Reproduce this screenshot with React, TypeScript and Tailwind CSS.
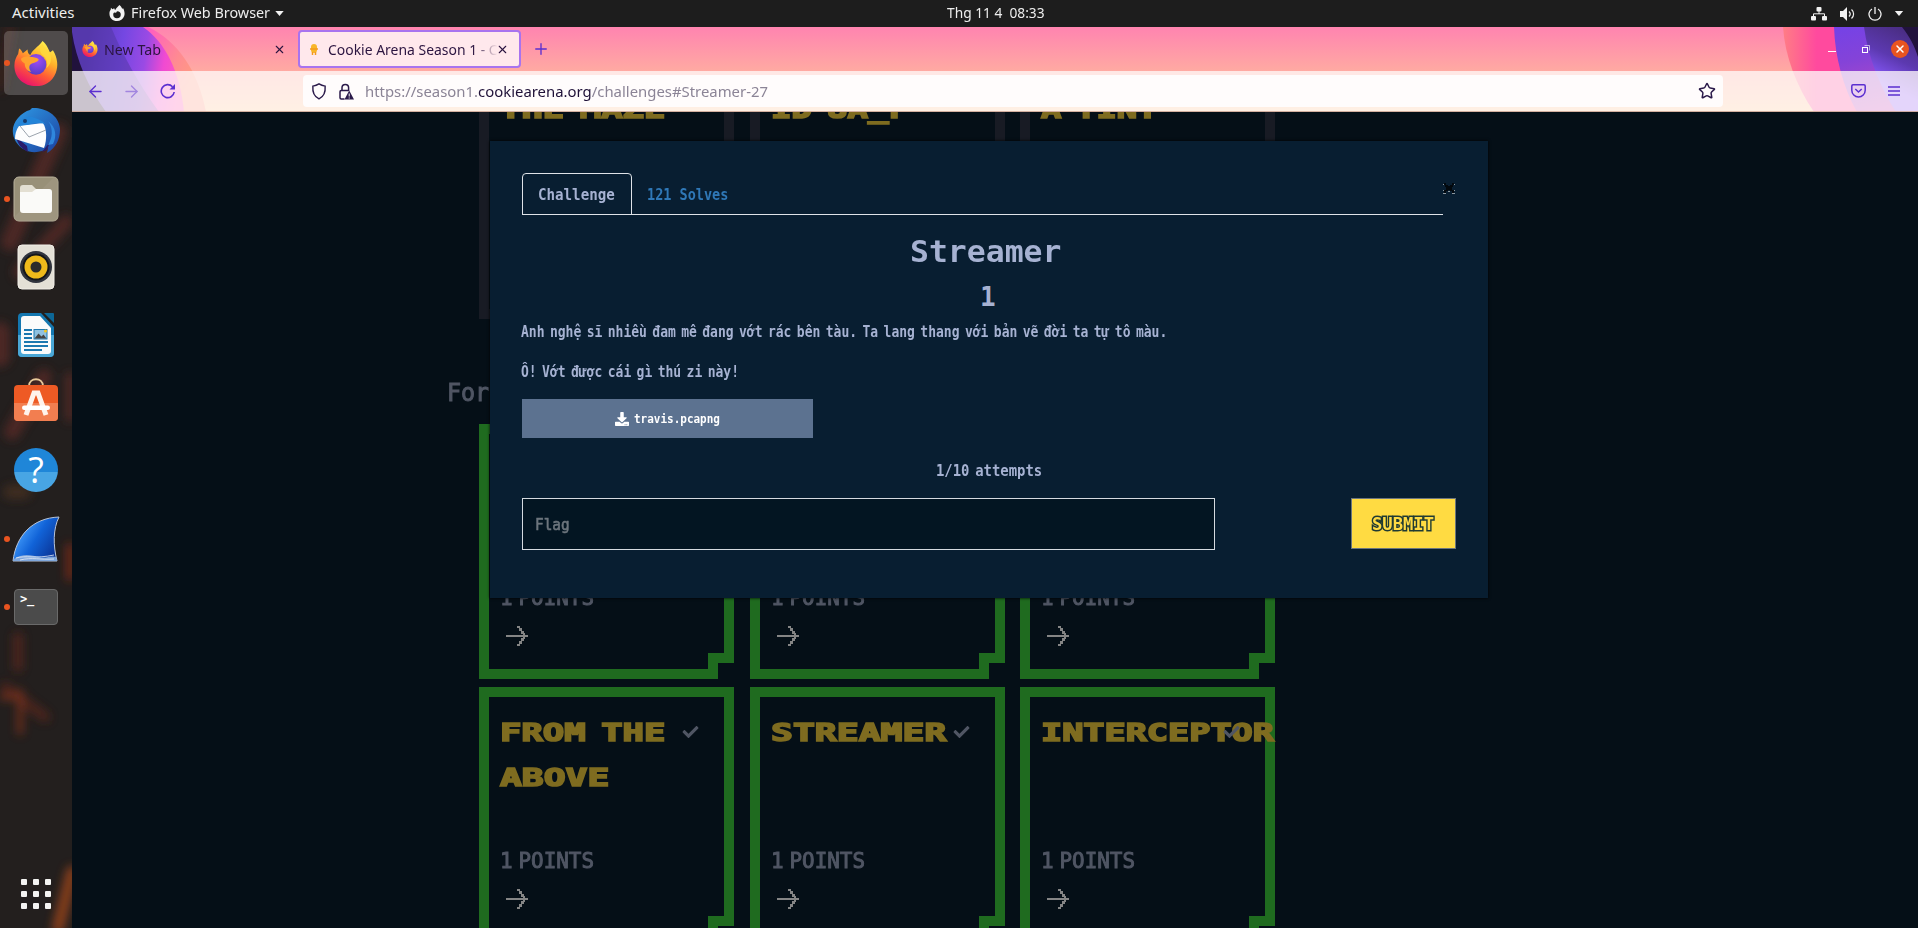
import { useLayoutEffect, useRef, type ReactNode } from "react";
import { FaDownload, FaCheck } from "react-icons/fa";
import { ArrowLeft, ArrowRight, Star, X, Plus } from "lucide-react";

/** Text condensed or widened horizontally so that it fills `w` pixels. */
function Fit({ w, className = "", children }: { w: number; className?: string; children: ReactNode }) {
  const ref = useRef<HTMLSpanElement>(null);
  useLayoutEffect(() => {
    const el = ref.current;
    if (el) el.style.transform = `scaleX(${w / el.offsetWidth})`;
  }, [w]);
  return (
    <span className={`block shrink-0 ${className}`} style={{ width: w }}>
      <span ref={ref} className="inline-block origin-left whitespace-nowrap align-top">
        {children}
      </span>
    </span>
  );
}

const UI = "font-['Noto_Sans',sans-serif]";
const PIXEL = "font-['DejaVu_Sans_Mono',monospace] font-bold";

function FirefoxLogo({ className }: { className: string }) {
  return (
    <svg viewBox="0 0 48 50" className={className}>
      <defs>
        <linearGradient id="fxBody" x1="0.8" y1="0.05" x2="0.3" y2="1">
          <stop offset="0" stopColor="#fff44f" />
          <stop offset="0.35" stopColor="#ffb02a" />
          <stop offset="0.65" stopColor="#ff5a36" />
          <stop offset="1" stopColor="#e8106e" />
        </linearGradient>
        <radialGradient id="fxGlobe" cx="0.55" cy="0.3" r="0.8">
          <stop offset="0" stopColor="#a14bf5" />
          <stop offset="1" stopColor="#4a3cc0" />
        </radialGradient>
      </defs>
      <path d="M31 1c5 4 6 9 8 12l3-2c5 8 6 17 3 24C41 45 33 49 24 49 11 49 1 40 1 27c0-5 2-9 4-12l1-6c2 1 3 3 4 5l5-4c0 3 1 5 3 6 2-6 8-8 13-15z" fill="url(#fxBody)" />
      <circle cx="24" cy="26" r="11" fill="url(#fxGlobe)" />
      <path d="M8 20c4-3 8-3 11-2 3 0 7 1 8 3-2 3-6 3-9 5-2 2-1 6 1 8-5-1-7-5-7-9-2-1-4-3-4-5z" fill="#ffa12e" />
      <path d="M31 4c-4 5-3 9 0 12 5 4 6 9 4 14 5-4 6-9 4-15-2-4-7-6-8-11z" fill="#ffd83d" opacity="0.85" />
    </svg>
  );
}

function Thunderbird() {
  return (
    <svg viewBox="0 0 48 48" className="h-12 w-12">
      <defs>
        <linearGradient id="tb" x1="0" y1="0" x2="1" y2="1">
          <stop offset="0" stopColor="#2e9be6" />
          <stop offset="1" stopColor="#1c3f9e" />
        </linearGradient>
      </defs>
      <path d="M20 1c10-1 27 5 28 21 0 10-4 19-13 24l1-5-6 3c-10 3-20 0-26-9C-1 26 0 18 6 11c3-4 8-7 12-8z" fill="url(#tb)" />
      <path d="M4 30c2 8 6 12 12 15l-1-6zM30 45l5-2 3-8z" fill="#2b1c6b" />
      <path d="M7 19l24-3c4 6 4 17 1 25L3 32c0-5 1-9 4-13z" fill="#fdfdfe" />
      <path d="M8 19l9 11 17-7" fill="none" stroke="#9ba3ad" strokeWidth="1" />
      <path d="M6 19c3-8 10-11 17-8 5 2 8 3 10 6-10-3-14 1-21 1z" fill="#2384d8" />
      <circle cx="13" cy="14" r="2" fill="#173a6b" />
      <path d="M36 14c6 8 4 18 0 24l5-1c4-8 3-17-5-23z" fill="#2f86dd" />
    </svg>
  );
}

function Files() {
  return (
    <svg viewBox="0 0 46 46" className="h-[46px] w-[46px]">
      <rect x="1" y="1" width="44" height="44" rx="5" fill="#989078" stroke="#b9b29d" />
      <path d="M1 41L41 1a4 4 0 0 1 4 4v36a4 4 0 0 1-4 4H5a4 4 0 0 1-4-4z" fill="#a29a83" opacity="0.6" />
      <path d="M7 12a3 3 0 0 1 3-3h9l4 4h12a3 3 0 0 1 3 3v8H7z" fill="#e3dfd2" />
      <path d="M7 16h12l4-3h13a3 3 0 0 1 3 3v18a3 3 0 0 1-3 3H10a3 3 0 0 1-3-3z" fill="#fafaf8" />
    </svg>
  );
}

function Rhythmbox() {
  return (
    <svg viewBox="0 0 38 46" className="h-[46px] w-[38px]">
      <rect x="1" y="1" width="36" height="44" rx="4" fill="#e4e0d6" stroke="#f2efe8" />
      <circle cx="19" cy="23" r="16" fill="#31343e" />
      <circle cx="19" cy="23" r="13.5" fill="#15161a" />
      <circle cx="19" cy="23" r="11.5" fill="#eeb91b" />
      <circle cx="19" cy="23" r="5.5" fill="#2b2b2b" />
    </svg>
  );
}

function Writer() {
  return (
    <svg viewBox="0 0 38 46" className="h-[46px] w-[38px]">
      <path d="M5 1h19l13 14v26a4 4 0 0 1-4 4H5a4 4 0 0 1-4-4V5a4 4 0 0 1 4-4z" fill="#1477b0" />
      <path d="M1 23h36v18a4 4 0 0 1-4 4H5a4 4 0 0 1-4-4z" fill="#4aa7d6" />
      <path d="M27 1h9a1 1 0 0 1 1 1v9z" fill="#0d6797" />
      <path d="M4 7a3 3 0 0 1 3-3h16l11 12v23a3 3 0 0 1-3 3H7a3 3 0 0 1-3-3z" fill="#fbfbfb" />
      <path d="M7 18h8M7 22h8M7 26h8M7 30h24M7 34h24M7 38h18" stroke="#1c78b0" strokeWidth="2" />
      <rect x="17" y="17.500" width="13" height="9.500" fill="#8fc1e0" stroke="#1c78b0" />
      <path d="M17.500 26.500l4-5 3 3 2-2 3 4z" fill="#444" />
      <circle cx="28.500" cy="19" r="1.500" fill="#f5c518" />
    </svg>
  );
}

function Software() {
  return (
    <svg viewBox="0 0 46 44" className="-mt-1 h-11 w-[46px]">
      <path d="M16 10V8c0-9 14-9 14 0v2" fill="none" stroke="#e8c99a" strokeWidth="1.800" />
      <rect x="1" y="7" width="44" height="36" rx="4" fill="#ee5a24" />
      <path d="M1 25h44v14a4 4 0 0 1-4 4H5a4 4 0 0 1-4-4z" fill="#f27e50" />
      <path d="M13 37L21 15h4l8 22" fill="none" stroke="#fff3ec" strokeWidth="5" />
      <rect x="9" y="27.500" width="28" height="4.500" rx="2.200" fill="#fff" />
    </svg>
  );
}

function Wireshark() {
  return (
    <svg viewBox="0 0 48 46" className="h-[46px] w-12">
      <defs>
        <linearGradient id="ws" x1="0" y1="0.2" x2="1" y2="0.8">
          <stop offset="0.2" stopColor="#3b93f5" />
          <stop offset="0.5" stopColor="#1163d8" />
          <stop offset="1" stopColor="#0a2f8f" />
        </linearGradient>
      </defs>
      <path d="M1 45C4 20 20 2 47 1c-6 12-6 28-2 44z" fill="url(#ws)" stroke="#b8c4d8" strokeWidth="1" />
      <path d="M2 43c8-6 18-4 25-2s12-2 17 0l1 4H1z" fill="#7ea6dc" />
      <path d="M4 42c10-3 20 1 38-3M8 44c12-3 20 0 34-1" stroke="#e8eef8" fill="none" strokeWidth="0.800" />
    </svg>
  );
}

const dock = [
  { h: "h-[68px]", dot: false, icon: <Thunderbird /> },
  { h: "h-[68px]", dot: true, icon: <Files /> },
  { h: "h-[68px]", dot: false, icon: <Rhythmbox /> },
  { h: "h-[68px]", dot: false, icon: <Writer /> },
  { h: "h-[66px]", dot: false, icon: <Software /> },
  {
    h: "h-[70px]",
    dot: false,
    icon: (
      <span className="flex h-11 w-11 items-center justify-center rounded-full bg-linear-to-b from-[#1f86d8] from-55% to-[#48a5e4] to-55% font-['Open_Sans',sans-serif] text-[36px] leading-none text-white">
        ?
      </span>
    ),
  },
  { h: "h-[67px]", dot: true, icon: <Wireshark /> },
  {
    h: "h-[69px]",
    dot: true,
    icon: (
      <span className="flex h-9 w-11 items-start rounded-[4px] border border-[#6a6a6a] bg-[#4b4b4b] px-[5px] pt-[3px] font-['DejaVu_Sans_Mono',monospace] text-[12px] leading-none font-bold tracking-tight text-white">
        &gt;_
      </span>
    ),
  },
];

function Dock() {
  return (
    <aside className="relative flex w-[72px] shrink-0 flex-col overflow-hidden bg-[#231f1e]">
      <svg viewBox="0 0 72 901" className="absolute inset-0 h-full w-full">
        <defs>
          <filter id="soft" x="-50%" y="-50%" width="200%" height="200%">
            <feGaussianBlur stdDeviation="5" />
          </filter>
        </defs>
        <g filter="url(#soft)" fill="none" stroke="#5a2a26" strokeLinecap="round" opacity="0.75">
          <path d="M58 105L10 215" strokeWidth="18" />
          <path d="M66 195L20 245" strokeWidth="14" />
          <path d="M0 305v25" strokeWidth="20" />
          <path d="M44 350L12 405" strokeWidth="16" />
          <path d="M70 350v40" strokeWidth="10" />
          <path d="M10 0L0 60" strokeWidth="10" stroke="#3f201e" />
          <path d="M70 520v30" strokeWidth="8" stroke="#8a2a18" />
          <path d="M18 610v30M5 660l40 30" strokeWidth="10" stroke="#5a261a" />
          <path d="M20 665v40M2 670h18" strokeWidth="6" stroke="#8a351c" />
          <path d="M72 845L58 901" strokeWidth="12" stroke="#a8481c" />
          <path d="M10 465h14" strokeWidth="14" stroke="#4a3222" />
        </g>
      </svg>
      <div className="relative mx-1 mt-1 flex h-16 items-center justify-center rounded-[5px] bg-white/20">
        <i className="absolute top-[29px] left-0 h-1.5 w-1.5 rounded-full bg-[#e95420]" />
        <FirefoxLogo className="h-[47px] w-[46px]" />
      </div>
      <div className="mt-[2px] flex flex-col">
        {dock.map((d, i) => (
          <div key={i} className={`relative flex items-center justify-center ${d.h}`}>
            {d.dot && <i className="absolute left-1 h-1.5 w-1.5 rounded-full bg-[#e95420]" />}
            {d.icon}
          </div>
        ))}
      </div>
      <div className="relative mt-auto mb-[19px] grid grid-cols-[6px_6px_6px] gap-1.5 self-center">
        {Array.from({ length: 9 }, (_, i) => (
          <i key={i} className="h-1.5 w-1.5 rounded-[1px] bg-[#f4f4f2]" />
        ))}
      </div>
    </aside>
  );
}

function TopBar() {
  return (
    <header className={`flex h-[27px] items-center bg-[#1d1d1d] text-[15px] leading-[25px] text-[#ededed] ${UI}`}>
      <Fit w={63} className="ml-3 pb-0.5">Activities</Fit>
      <svg viewBox="0 0 16 18" className="ml-[34px] h-[17px] w-4">
        <path d="M10.500 0c2 1.500 2.500 3 3 4l1-.500c1.500 3 2 6 1 8.500-1.200 3.400-4 5-7.500 5-4.500 0-8-3-8-8 0-1.800.6-3 1.300-4l.3-2 1.600 1.600L5 3.500l1 2C7 3 9 2 10.500 0z" fill="#f2f2f2" />
        <path d="M8 6.500c3 0 4 1.500 4 3.500a4 4 0 0 1-8 0c0-1 .3-1.600 1-2l2 .3z" fill="#1d1d1d" />
      </svg>
      <Fit w={139} className="ml-[6px] pb-0.5">Firefox Web Browser</Fit>
      <svg viewBox="0 0 10 6" className="ml-[5px] h-[5px] w-[9px]"><path d="M0 0h10L5 6z" fill="#f2f2f2" /></svg>
      <Fit w={98} className="ml-[663px] pb-0.5 whitespace-pre">Thg 11 4&nbsp; 08:33</Fit>
      <div className="mr-[14px] ml-auto flex items-center">
        <svg viewBox="0 0 16 14" className="h-[14px] w-4" fill="#f2f2f2">
          <rect x="5.500" y="0" width="5" height="4.500" rx="1" />
          <rect x="0" y="9" width="5" height="4.500" rx="1" />
          <rect x="11" y="9" width="5" height="4.500" rx="1" />
          <path d="M8 4v3M2.500 9V6.800h11V9" fill="none" stroke="#f2f2f2" />
        </svg>
        <svg viewBox="0 0 15 14" className="ml-[13px] h-[14px] w-[15px]">
          <path d="M0 4h3l4-4v14l-4-4H0z" fill="#f2f2f2" />
          <path d="M9 4.500c1.400 1.400 1.400 3.600 0 5M11.500 2.500c2.800 2.500 2.800 6.500 0 9" fill="none" stroke="#f2f2f2" strokeWidth="1.200" />
        </svg>
        <svg viewBox="0 0 14 14" className="ml-[13px] h-[14px] w-[14px]">
          <path d="M4 2a6 6 0 1 0 6 0M7 0v7" fill="none" stroke="#f2f2f2" strokeWidth="1.300" />
        </svg>
        <svg viewBox="0 0 10 6" className="ml-[12px] h-[5px] w-[10px]"><path d="M0 0h10L5 6z" fill="#f2f2f2" /></svg>
      </div>
    </header>
  );
}

function ThemeArt() {
  return (
    <svg viewBox="72 27 1846 85" className="absolute inset-0 h-full w-full" preserveAspectRatio="none">
      <defs>
        <linearGradient id="sky" x1="0" y1="0" x2="0" y2="1">
          <stop offset="0" stopColor="#ff84b0" />
          <stop offset="0.52" stopColor="#ffaaa2" />
          <stop offset="1" stopColor="#ffd09c" />
        </linearGradient>
        <linearGradient id="glow" gradientUnits="userSpaceOnUse" x1="150" y1="27" x2="206" y2="60">
          <stop offset="0" stopColor="#ff5ec0" />
          <stop offset="0.6" stopColor="#ff8a92" />
          <stop offset="1" stopColor="#ff9c80" />
        </linearGradient>
        <linearGradient id="flame" gradientUnits="userSpaceOnUse" x1="85" y1="60" x2="182" y2="75">
          <stop offset="0" stopColor="#5b3ab8" />
          <stop offset="0.35" stopColor="#7447e2" />
          <stop offset="0.6" stopColor="#9a4ae4" />
          <stop offset="0.8" stopColor="#f04ad2" />
          <stop offset="1" stopColor="#ff5cba" />
        </linearGradient>
        <linearGradient id="flameR" x1="0" y1="0" x2="1" y2="0">
          <stop offset="0" stopColor="#ff7d85" />
          <stop offset="0.25" stopColor="#ff4a9e" />
          <stop offset="1" stopColor="#ff4a9e" />
        </linearGradient>
        <linearGradient id="violetR" gradientUnits="userSpaceOnUse" x1="1840" y1="27" x2="1860" y2="112">
          <stop offset="0" stopColor="#7542e6" />
          <stop offset="0.4" stopColor="#8443d8" />
          <stop offset="1" stopColor="#c04ac0" />
        </linearGradient>
        <linearGradient id="deepR" gradientUnits="userSpaceOnUse" x1="1905" y1="32" x2="1880" y2="82">
          <stop offset="0" stopColor="#4b2e86" />
          <stop offset="0.5" stopColor="#5c39b0" />
          <stop offset="1" stopColor="#8a5aff" />
        </linearGradient>
      </defs>
      <rect x="72" y="27" width="1846" height="85" fill="url(#sky)" />
      <path d="M72 27h76c30 14 50 44 58 85H72z" fill="url(#glow)" />
      <path d="M72 27h71c22 15 37 44 41 85H72z" fill="url(#flame)" />
      <path d="M72 27h39c10 24 26 55 48 85H72z" fill="#50359f" opacity="0.5" />
      <path d="M72 32c4 28 16 55 34 80H72z" fill="#21123c" />
      <path d="M1783 27c2 30 14 60 31 85h104V27z" fill="url(#flameR)" />
      <path d="M1834 27c1 30 9 60 23 85h61V27z" fill="url(#violetR)" />
      <path d="M1864 27c4 30 16 60 32 85h22V27z" fill="url(#deepR)" />
      <path d="M1902 27c8 10 13 20 16 30V27z" fill="#21123c" />
    </svg>
  );
}

function Chrome() {
  return (
    <div className={`relative h-[85px] shrink-0 ${UI}`}>
      <ThemeArt />
      <div className="relative flex h-11 items-center text-[15px] leading-6 text-[#2b1440]">
        <FirefoxLogo className="ml-[10px] h-[18px] w-4" />
        <Fit w={57} className="ml-1.5">New Tab</Fit>
        <X className="ml-[112px] h-[13px] w-[13px]" strokeWidth={2} />
        <div className="ml-[12px] flex h-[38px] w-[223px] items-center rounded-[4px] border-2 border-[#a873ef] bg-[#ffe8ec]">
          <svg viewBox="0 0 8 11" className="ml-[10px] h-[11px] w-2">
            <rect x="1" y="0" width="6" height="9" rx="3" fill="#f8b62a" />
            <path d="M0 5h8M2.500 8v3M5.500 8v3" stroke="#f29a1f" strokeWidth="1.500" />
          </svg>
          <Fit w={170} className="ml-[10px] h-6 overflow-hidden mask-r-from-85% mask-r-to-100%">Cookie Arena Season 1 - C</Fit>
          <X className="-ml-[2px] h-[13px] w-[13px] shrink-0" strokeWidth={2} />
        </div>
        <Plus className="ml-[11px] h-[18px] w-[18px] text-[#5b2fd0]" strokeWidth={1.8} />
        <div className="mr-[9px] ml-auto flex items-center text-white">
          <i className="mt-1 mr-[26px] h-px w-2 bg-white" />
          <svg viewBox="0 0 8 8" className="mr-[21px] h-2 w-2" fill="none" stroke="#fff">
            <rect x="0.500" y="2.500" width="5" height="5" />
            <path d="M2.500.5h5v5" opacity="0.6" />
          </svg>
          <span className="flex h-[18px] w-[18px] items-center justify-center rounded-full bg-[#e95420]">
            <X className="h-3 w-3" strokeWidth={3} />
          </span>
        </div>
      </div>
      <div className="relative flex h-[41px] items-center border-b border-[#c9a08e]/80 bg-[rgba(255,250,250,0.77)] text-[#5b2fd0]">
        <ArrowLeft className="ml-[14px] h-[19px] w-[19px]" strokeWidth={1.7} />
        <ArrowRight className="ml-[17px] h-[19px] w-[19px] opacity-45" strokeWidth={1.7} />
        <svg viewBox="0 0 16 16" className="ml-[19px] h-4 w-4" fill="none" stroke="currentColor" strokeWidth="1.600">
          <path d="M14.200 9A6.500 6.500 0 1 1 12.500 3.700" />
          <path d="M15 1v5.500H9.500z" fill="currentColor" stroke="none" />
        </svg>
        <div className="ml-[127px] flex h-8 w-[1420px] items-center rounded-[4px] bg-[#fffcfc] text-[15px] leading-6 text-[#2b1a4a]">
          <svg viewBox="0 0 16 18" className="ml-[8px] h-[17px] w-4" fill="none" stroke="currentColor" strokeWidth="1.500">
            <path d="M8 1c2 1.300 4 2 6.500 2.300C15 9.500 13 14.500 8 16.800 3 14.500 1 9.500 1.500 3.300 4 3 6 2.300 8 1z" />
          </svg>
          <svg viewBox="0 0 16 17" className="ml-[11px] h-[17px] w-4" fill="none" stroke="currentColor" strokeWidth="1.500">
            <path d="M4 7.500V4.800a3.300 3.300 0 0 1 6.600 0V8M6.500 16H3.200A1.200 1.200 0 0 1 2 14.800V8.700a1.200 1.200 0 0 1 1.200-1.200h7.500" />
            <path d="M11.200 7.500L16 16.500H6.500z" fill="currentColor" stroke="none" />
            <path d="M11.200 10.500v3M11.200 14.500v1" stroke="#fff" strokeWidth="1" />
          </svg>
          <Fit w={403} className="ml-[11px] text-[#8b8496]">
            https://season1.<span className="text-[#1f1138]">cookiearena.org</span>/challenges#Streamer-27
          </Fit>
          <Star className="mr-[7px] ml-auto h-[18px] w-[18px]" strokeWidth={2} />
        </div>
        <svg viewBox="0 0 15 14" className="ml-auto h-[14px] w-[15px]" fill="none" stroke="currentColor" strokeWidth="1.500">
          <path d="M2 .8h11c.7 0 1.200.5 1.200 1.200v4.300a6.700 6.700 0 0 1-13.400 0V2C.8 1.300 1.300.8 2 .8z" />
          <path d="M4.300 5l3.200 3 3.200-3" />
        </svg>
        <svg viewBox="0 0 12 10" className="mr-[18px] ml-[22px] h-[10px] w-3" stroke="currentColor" strokeWidth="1.300">
          <path d="M0 1h12M0 5h12M0 9h12" />
        </svg>
      </div>
    </div>
  );
}

type Line = { text: string; w: number };

function Card({ lines, solved }: { lines: Line[]; solved: boolean }) {
  return (
    <article className={`relative h-[255px] w-[255px] ${PIXEL}`}>
      <div
        className={`absolute inset-0 p-[10px] [clip-path:polygon(0_0,255px_0,255px_239px,239px_239px,239px_255px,0_255px)] ${solved ? "bg-[#1f6b1f]" : "bg-[#181b24]"}`}
      >
        <div className="h-full bg-[#050f17] [clip-path:polygon(0_0,235px_0,235px_219px,219px_219px,219px_235px,0_235px)]" />
      </div>
      <div className="relative flex h-full flex-col pt-6 pl-[21px]">
        <div className="h-[134px] text-[24px] leading-[45px] text-[#7f6c20] [-webkit-text-stroke:1.6px_#7f6c20] [word-spacing:-4px]">
          {lines.map((l) => (
            <Fit key={l.text} w={l.w}>{l.text}</Fit>
          ))}
        </div>
        <Fit w={94} className="mt-px h-[30px] text-[22px] leading-[30px] font-normal text-[#505664] [-webkit-text-stroke:1px_#505664] [word-spacing:-7px]">
          1 POINTS
        </Fit>
        <svg viewBox="0 0 22 22" className="mt-[12px] ml-[6px] h-[22px] w-[22px]" fill="#858585" shapeRendering="crispEdges">
          <path d="M0 10h17v2H0zM11 1h3v2h-3zM13 3h3v3h-3zM15 6h3v3h-3zM17 8h2v6h-2zM19 10h3v2h-3zM15 13h3v3h-3zM13 16h3v3h-3zM11 19h3v2h-3z" />
        </svg>
        {solved && <FaCheck className="absolute top-[37px] left-[203px] h-4 w-[17px] text-[#505664]" />}
      </div>
    </article>
  );
}

function CardRow({ cards, solved }: { cards: Line[][]; solved: boolean }) {
  return (
    <div className="grid grid-cols-[256px_255px_255px] gap-x-[15px]">
      {cards.map((lines, i) => (
        <Card key={i} lines={lines} solved={solved} />
      ))}
    </div>
  );
}

function Modal() {
  return (
    <section
      className={`absolute top-[29px] left-[418px] flex h-[457px] w-[998px] flex-col bg-[#081e31] px-8 pt-8 text-[16px] leading-6 text-[#a6b2d2] shadow-[0_0_3px_#000] ${PIXEL}`}
    >
      <div className="flex">
        <nav className="flex h-[42px] w-[921px] border-b border-[#dfe3e8]">
          <div className="-mb-px flex w-[110px] items-center justify-center rounded-t-[4px] border border-[#dfe3e8] pt-px pr-px">
            <Fit w={77}>Challenge</Fit>
          </div>
          <div className="flex items-center pt-[3px] pl-[15px] text-[#2f78b7]">
            <Fit w={81}>121 Solves</Fit>
          </div>
        </nav>
        <svg viewBox="0 0 12 11" className="mt-[10px] h-[11px] w-3" shapeRendering="crispEdges">
          <path d="M0 1h3v1H0zM9 1h3v1H9zM0 10h3v1H0zM9 10h3v1H9zM5 8h2v1H5zM0 7h1v1H0zM11 7h1v1h-1z" fill="#8c979f" />
          <path d="M1 0h2v2h2v1h2V2h2V0h2v2h-1v2H9v3h2v3H9V8H7V7H5v1H3v2H1V7h2V4H2V2H1z" fill="#02080d" />
        </svg>
      </div>
      <h2 className="mt-[14px] flex h-[45px] justify-center pr-1.5 text-[30px] leading-[45px]">
        <Fit w={152}>Streamer</Fit>
      </h2>
      <div className="mt-[3px] flex h-10 justify-center pr-0.5 text-[26px] leading-10">
        <Fit w={16}>1</Fit>
      </div>
      <p className="mt-[3px] [word-spacing:-3px]">
        <Fit w={646} className="-ml-px">Anh nghệ sĩ nhiều đam mê đang vớt rác bên tàu. Ta lang thang với bản vẽ đời ta tự tô màu.</Fit>
      </p>
      <p className="mt-4 [word-spacing:-3px]">
        <Fit w={218} className="-ml-px">Ô! Vớt được cái gì thú zi này!</Fit>
      </p>
      <div className="mt-[15px] flex h-[39px] w-[291px] items-center justify-center gap-[5px] bg-[#5c7290] text-[12px] text-white">
        <FaDownload className="h-[14px] w-[14px]" />
        <Fit w={86}>travis.pcapng</Fit>
      </div>
      <div className="mt-[21px] flex justify-center pr-px [word-spacing:-3px]">
        <Fit w={106}>1/10 attempts</Fit>
      </div>
      <div className="mt-[15px] flex items-start justify-between">
        <div className="flex h-[52px] w-[693px] items-center border border-[#d5dae0] bg-[#031522] pt-px pl-3 font-normal text-[#6c757d] [-webkit-text-stroke:0.6px_#6c757d]">
          <Fit w={35}>Flag</Fit>
        </div>
        <div className="flex h-[51px] w-[105px] items-center justify-center border border-[#6c757d] bg-[#ffdb42] pt-px pr-px text-[18px] text-[#ffdb42] [paint-order:stroke_fill] [-webkit-text-stroke:3px_#1f3a33]">
          <Fit w={62}>SUBMIT</Fit>
        </div>
      </div>
    </section>
  );
}

export default function App() {
  return (
    <div className="flex h-[928px] w-[1918px] flex-col overflow-hidden bg-[#050f17]">
      <TopBar />
      <div className="flex min-h-0 flex-1">
        <Dock />
        <div className="flex min-w-0 flex-1 flex-col">
          <Chrome />
          <main className="relative min-h-0 flex-1 overflow-hidden bg-[#050f17]">
            <div className="-mt-12 pl-[407px]">
              <CardRow
                solved={false}
                cards={[[{ text: "THE MAZE", w: 166 }], [{ text: "ID UA_F", w: 138 }], [{ text: "A TINY", w: 117 }]]}
              />
              <h3 className={`-ml-8 flex h-[105px] items-center pt-[42px] text-[25px] leading-[30px] text-[#505664] ${PIXEL}`}>
                <Fit w={126} className="font-normal [-webkit-text-stroke:1px_#505664]">Forensics</Fit>
              </h3>
              <div className="flex flex-col gap-2">
                <CardRow solved cards={[[], [], []]} />
                <CardRow
                  solved
                  cards={[
                    [{ text: "FROM THE", w: 166 }, { text: "ABOVE", w: 109 }],
                    [{ text: "STREAMER", w: 176 }],
                    [{ text: "INTERCEPTOR", w: 233 }],
                  ]}
                />
              </div>
            </div>
            <Modal />
          </main>
        </div>
      </div>
    </div>
  );
}
